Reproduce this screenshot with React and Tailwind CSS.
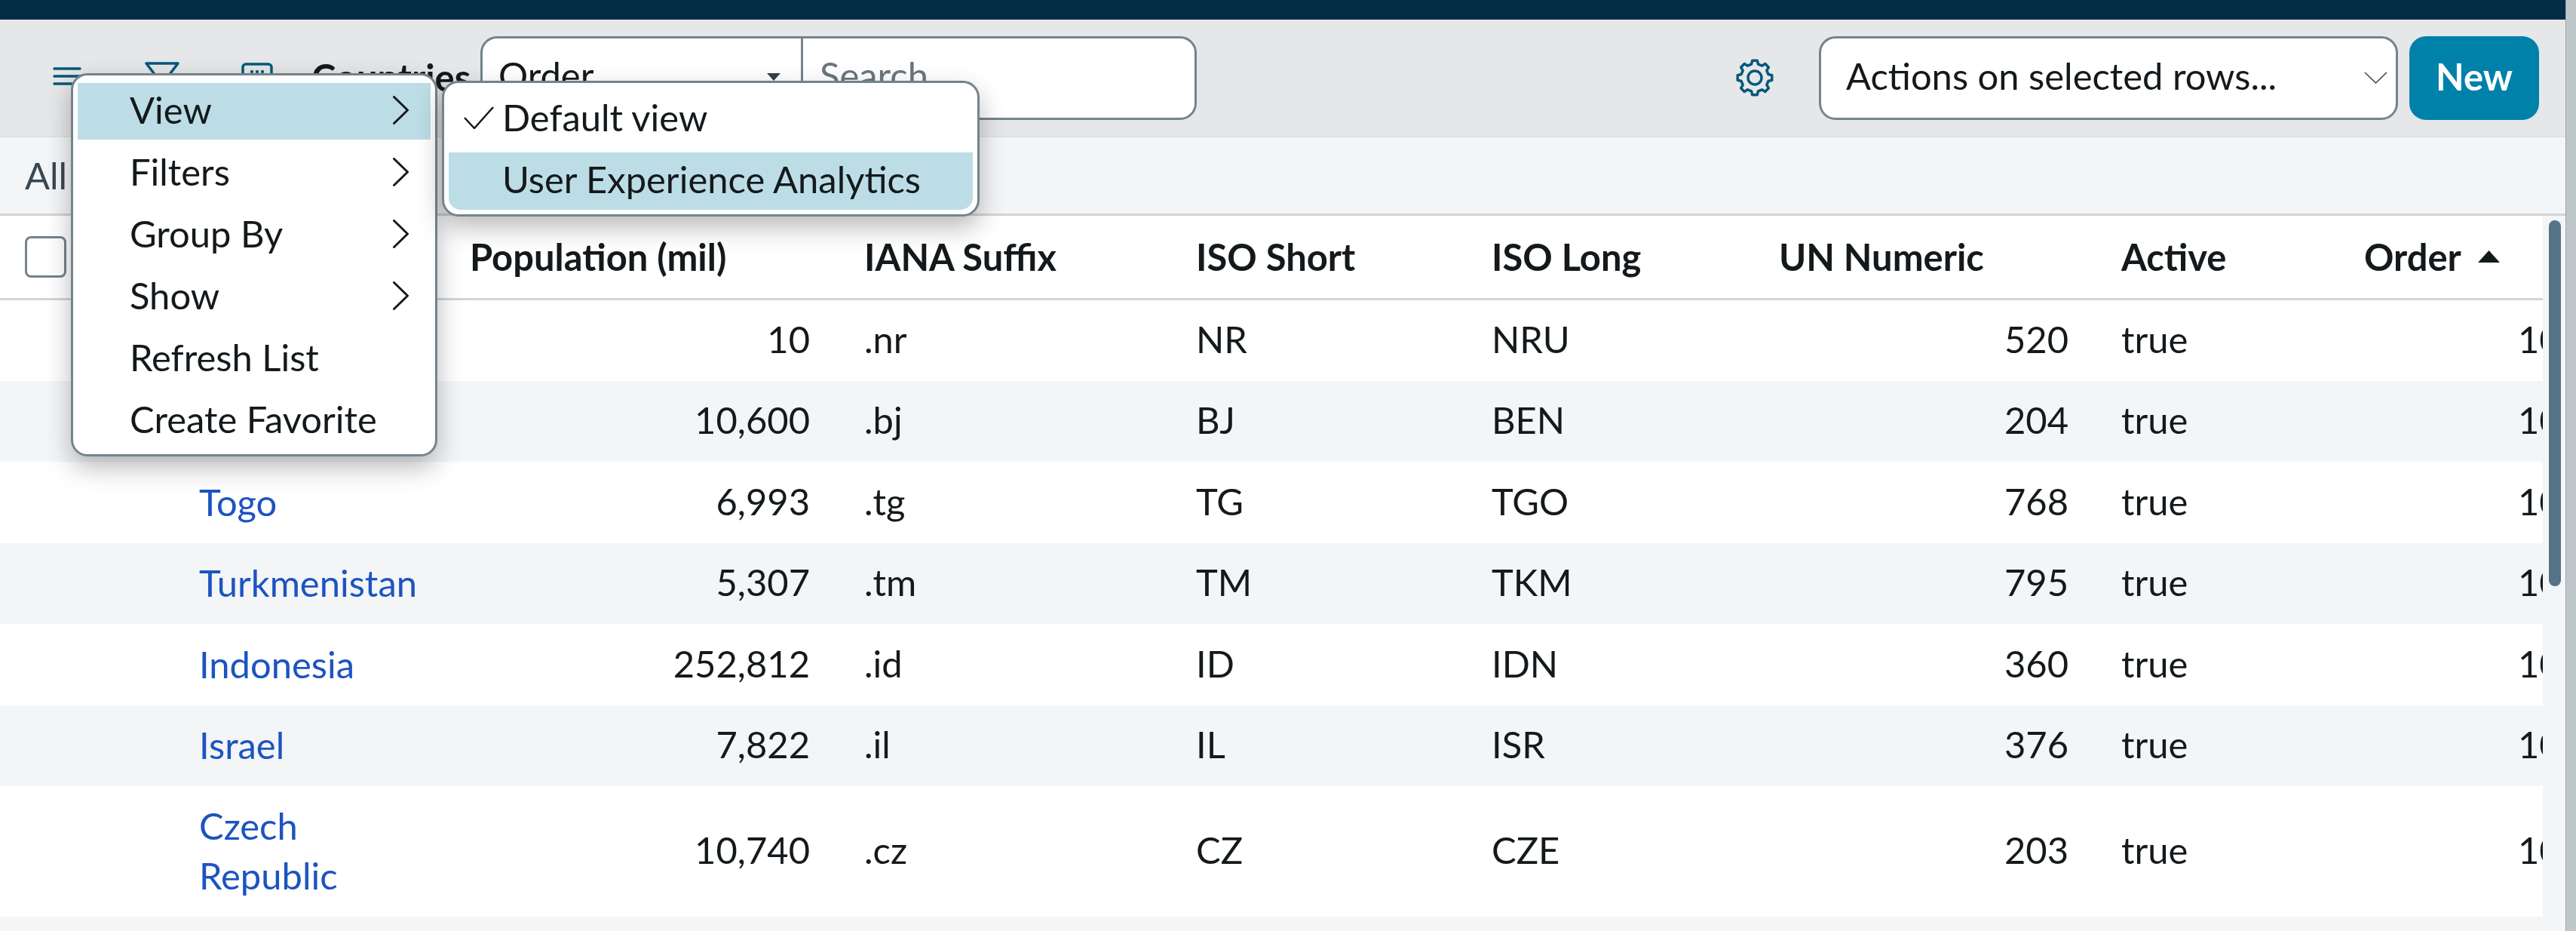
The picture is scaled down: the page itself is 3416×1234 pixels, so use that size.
import React from 'react';

const rows = [
  { name: 'Nauru', pop: '10', iana: '.nr', s: 'NR', l: 'NRU', un: '520', h: 'h-[107px]' },
  { name: 'Benin', pop: '10,600', iana: '.bj', s: 'BJ', l: 'BEN', un: '204', h: 'h-[107px]' },
  { name: 'Togo', pop: '6,993', iana: '.tg', s: 'TG', l: 'TGO', un: '768', h: 'h-[108px]' },
  { name: 'Turkmenistan', pop: '5,307', iana: '.tm', s: 'TM', l: 'TKM', un: '795', h: 'h-[107px]' },
  { name: 'Indonesia', pop: '252,812', iana: '.id', s: 'ID', l: 'IDN', un: '360', h: 'h-[108px]' },
  { name: 'Israel', pop: '7,822', iana: '.il', s: 'IL', l: 'ISR', un: '376', h: 'h-[107px]' },
  { name: 'Czech Republic', pop: '10,740', iana: '.cz', s: 'CZ', l: 'CZE', un: '203', h: 'h-[173px]' },
  { name: 'Spain', pop: '46,000', iana: '.es', s: 'ES', l: 'ESP', un: '724', h: 'h-[107px]' },
];

const gridCols = 'grid grid-cols-[264px_359px_523px_440px_392px_381px_454px_322px_237px]';

// 8 tooth cog outline, top tooth pointing up
const cogPath = () => {
  const pts = [];
  for (let i = 0; i < 8; i++) {
    const a = (i * Math.PI) / 4 - Math.PI / 2;
    const step = Math.PI / 8;
    [[-0.62, 18.5], [-0.36, 23], [0.36, 23], [0.62, 18.5]].forEach(([o, r]) => {
      const t = a + o * step;
      pts.push(`${(25 + r * Math.cos(t)).toFixed(2)} ${(25 + r * Math.sin(t)).toFixed(2)}`);
    });
  }
  return `M${pts.join('L')}Z`;
};

const Chevron = () => (
  <svg width="21" height="38" viewBox="0 0 21 38" fill="none" stroke="#14191c" strokeWidth="3" strokeLinecap="round" strokeLinejoin="round">
    <path d="M1.5 1.5 19.5 19 1.5 36.5" />
  </svg>
);

const MenuItem = ({ label, active, arrow }) => (
  <div className={`h-[75px] mb-[7px] pl-[69px] pr-[29px] pb-[3px] flex items-center justify-between ${active ? 'bg-[#bcdde6]' : ''}`}>
    <span>{label}</span>
    {arrow && <Chevron />}
  </div>
);

export default function App() {
  return (
    <div className="relative w-[3416px] h-[1234px] overflow-hidden flex bg-white text-[#14191c] text-[48.9px] font-['Lato','Liberation_Sans',sans-serif]">
      <div className="w-[3402px] h-full flex flex-col">
        {/* Top strip */}
        <div className="h-[26px] bg-[#032d46] shrink-0" />

        {/* Toolbar */}
        <div className="h-[156px] shrink-0 bg-[#e6e7e9] border-b-2 border-[#e0e1e3] flex items-center pl-[70px] pr-[35px]">
          <svg width="38" height="26" viewBox="0 0 38 26" stroke="#03587a" strokeWidth="3.5" strokeLinecap="round" className="mt-[-4px]">
            <path d="M2 3h34M2 13h34M2 23h34" />
          </svg>
          <svg width="46" height="48" viewBox="0 0 46 48" fill="none" stroke="#03587a" strokeWidth="3.5" strokeLinejoin="round" className="ml-[84px] mt-[4px]">
            <path d="M2 3h42L28 24v16l-10 6V24Z" />
          </svg>
          <svg width="42" height="42" viewBox="0 0 42 42" fill="none" stroke="#03587a" strokeWidth="3.5" className="ml-[82px] mt-[2px]">
            <rect x="2" y="2" width="38" height="38" rx="4" />
            <path d="M12 12h4M19 12h4M26 12h4" />
          </svg>
          <span className="ml-[51px] font-bold w-[224px]">Countries</span>

          {/* Search group */}
          <div className="h-[111px] w-[950px] bg-white border-[3px] border-[#75838b] rounded-[22px] flex">
            <div className="w-[425px] border-r-[3px] border-[#75838b] pl-[21px] pr-[27px] flex items-center justify-between">
              <span className="mt-[-6px]">Order</span>
              <svg width="18" height="10" viewBox="0 0 18 10" fill="#35424a" className="mt-[-2px]">
                <path d="M0 0h18L9 10Z" />
              </svg>
            </div>
            <div className="flex-1 pl-[22px] flex items-center text-[#6a767e]">
              <span className="mt-[-6px]">Search</span>
            </div>
          </div>

          <svg width="50" height="50" viewBox="0 0 50 50" fill="none" stroke="#03587a" strokeWidth="3.5" strokeLinejoin="round" className="ml-auto">
            <path d={cogPath()} />
            <circle cx="25" cy="25" r="9" />
          </svg>
          <div className="ml-[60px] w-[768px] h-[111px] bg-white border-[3px] border-[#75838b] rounded-[22px] pl-[33px] pr-[11px] flex items-center justify-between">
            <span className="mb-[4px]">Actions on selected rows...</span>
            <svg width="31" height="16" viewBox="0 0 31 16" fill="none" stroke="#35424a" strokeWidth="1.5">
              <path d="M1 1l14.500 14L30 1" />
            </svg>
          </div>
          <div className="ml-[15px] w-[172px] h-[111px] pb-[3px] bg-[#0081aa] rounded-[22px] flex items-center justify-center text-white font-bold">
            New
          </div>
        </div>

        {/* Breadcrumb bar */}
        <div className="h-[104px] shrink-0 bg-[#f4f5f7] border-b-[3px] border-[#cfd5d8] flex items-center pl-[33px] text-[#3a4750]">
          All
        </div>

        <div className="flex-1 flex min-h-0">
          {/* Table */}
          <div className="w-[3372px] overflow-hidden">
            <div className={`${gridCols} h-[112px] border-b-[3px] border-[#cfd5d8] items-center font-bold`}>
              <div className="pl-[33px] flex items-center">
                <div className="w-[55px] h-[55px] bg-white border-[3px] border-[#75838b] rounded-[8px]" />
              </div>
              <div>Name</div>
              <div>Population (mil)</div>
              <div>IANA Suffix</div>
              <div>ISO Short</div>
              <div>ISO Long</div>
              <div>UN Numeric</div>
              <div>Active</div>
              <div className="flex items-center gap-[22px]">
                <span>Order</span>
                <svg width="29" height="16" viewBox="0 0 29 16" fill="#14191c">
                  <path d="M14.500 0 29 16H0Z" />
                </svg>
              </div>
            </div>
            {rows.map((r, i) => (
              <div key={r.name} className={`${gridCols} ${r.h} pb-[3px] items-center overflow-hidden ${i % 2 === 1 ? 'bg-[#f4f5f7]' : 'bg-white'}`}>
                <div />
                <div className="text-[#1c54c0] leading-[66px] pr-[130px]">{r.name}</div>
                <div className="text-right pr-[72px]">{r.pop}</div>
                <div>{r.iana}</div>
                <div>{r.s}</div>
                <div>{r.l}</div>
                <div className="text-right pr-[70px]">{r.un}</div>
                <div>true</div>
                <div className="pl-[204px] whitespace-nowrap overflow-hidden">100</div>
              </div>
            ))}
          </div>

          {/* Scrollbar */}
          <div className="w-[30px] bg-[#f4f5f7] pt-[6px] pl-[8px]">
            <div className="w-[16px] h-[485px] rounded-full bg-[#557385]" />
          </div>
        </div>
      </div>

      {/* Window edge */}
      <div className="w-[14px] h-full bg-[#c0c7cb] border-l border-[#9aa3a8]" />

      {/* Context menu */}
      <div className="absolute left-[94px] top-[97px] w-[486px] h-[508px] bg-white border-[3px] border-[#75838b] rounded-[22px] pt-[10px] px-[6px] shadow-[0_14px_34px_rgba(0,0,0,0.28)]">
        <MenuItem label="View" active arrow />
        <MenuItem label="Filters" arrow />
        <MenuItem label="Group By" arrow />
        <MenuItem label="Show" arrow />
        <MenuItem label="Refresh List" />
        <MenuItem label="Create Favorite" />
      </div>

      {/* View submenu */}
      <div className="absolute left-[586px] top-[107px] w-[713px] h-[180px] bg-white border-[3px] border-[#75838b] rounded-[22px] px-[6px] pt-[14px] shadow-[0_14px_34px_rgba(0,0,0,0.28)]">
        <div className="h-[78px] pb-[14px] flex items-center pl-[20px]">
          <svg width="40" height="30" viewBox="0 0 40 30" fill="none" stroke="#14191c" strokeWidth="2.5" className="shrink-0">
            <path d="M1 15l13 14L39 1" />
          </svg>
          <span className="ml-[11px]">Default view</span>
        </div>
        <div className="h-[76px] pb-[4px] bg-[#bcdde6] rounded-b-[16px] flex items-center pl-[71px]">User Experience Analytics</div>
      </div>
    </div>
  );
}
